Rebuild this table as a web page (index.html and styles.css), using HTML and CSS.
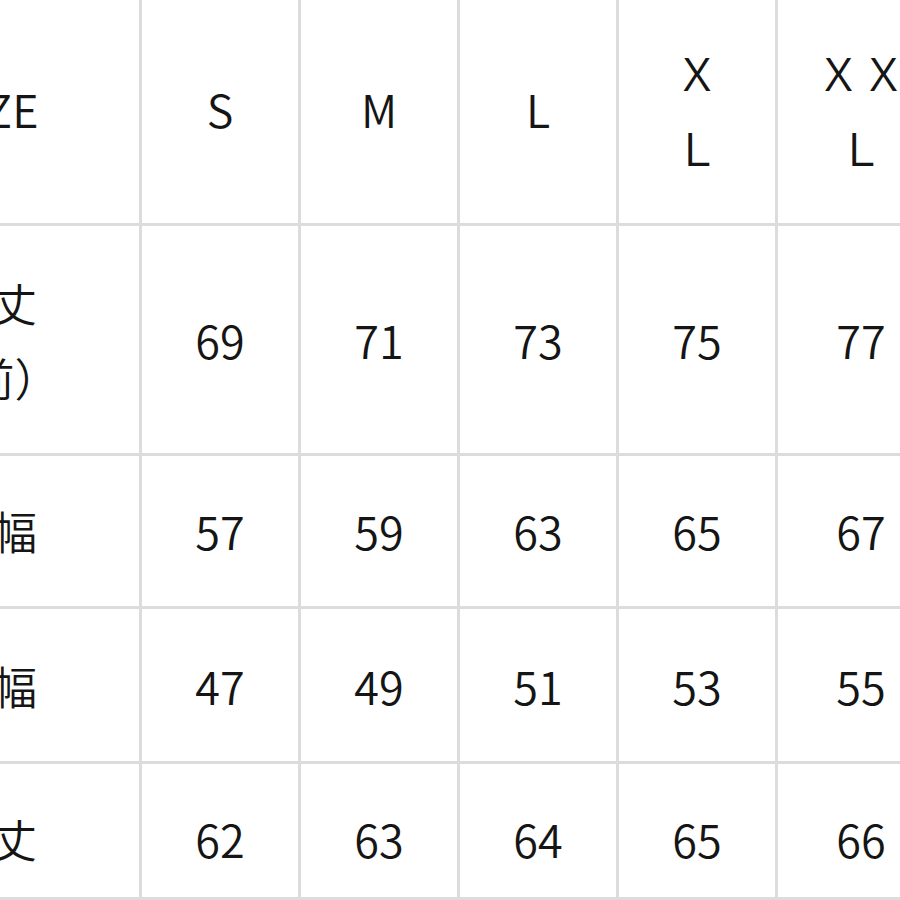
FILE: index.html
```html
<!DOCTYPE html>
<html lang="ja">
<head>
<meta charset="utf-8">
<title>サイズ表</title>
<link rel="stylesheet" href="styles.css">
</head>
<body>
<div class="chart">
  <div class="cell head">SIZE</div>
  <div class="cell head">S</div>
  <div class="cell head">M</div>
  <div class="cell head">L</div>
  <div class="cell head">Ｘ<br>Ｌ</div>
  <div class="cell head">ＸＸ<br>Ｌ</div>

  <div class="cell r1">着丈<br>（前）</div>
  <div class="cell r1">69</div>
  <div class="cell r1">71</div>
  <div class="cell r1">73</div>
  <div class="cell r1">75</div>
  <div class="cell r1">77</div>

  <div class="cell r2">身幅</div>
  <div class="cell r2">57</div>
  <div class="cell r2">59</div>
  <div class="cell r2">63</div>
  <div class="cell r2">65</div>
  <div class="cell r2">67</div>

  <div class="cell r3">肩幅</div>
  <div class="cell r3">47</div>
  <div class="cell r3">49</div>
  <div class="cell r3">51</div>
  <div class="cell r3">53</div>
  <div class="cell r3">55</div>

  <div class="cell r4">袖丈</div>
  <div class="cell r4">62</div>
  <div class="cell r4">63</div>
  <div class="cell r4">64</div>
  <div class="cell r4">65</div>
  <div class="cell r4">66</div>
</div>
</body>
</html>
```
FILE: styles.css
```css
html, body {
  margin: 0;
  padding: 0;
  background: #ffffff;
  overflow: hidden;
  width: 900px;
  height: 900px;
}

.chart {
  display: grid;
  grid-template-columns: 294px 156px 156px 156px 156px 166px;
  grid-template-rows: 223px 227px 150px 152px 133px;
  gap: 3px;
  background: #dcdcdc;
  padding-bottom: 3px;
  margin-left: -155px;
  width: max-content;
  font-family: "Noto Sans CJK JP", "Noto Sans", sans-serif;
  font-weight: 350;
  font-size: 45px;
  line-height: 75px;
  color: #151515;
}

.cell {
  background: #ffffff;
  display: flex;
  align-items: center;
  justify-content: center;
  text-align: center;
}

.head {
  padding-bottom: 6px;
}

.r2 {
  padding-bottom: 2px;
}

.r4 {
  padding-top: 16px;
}
```
